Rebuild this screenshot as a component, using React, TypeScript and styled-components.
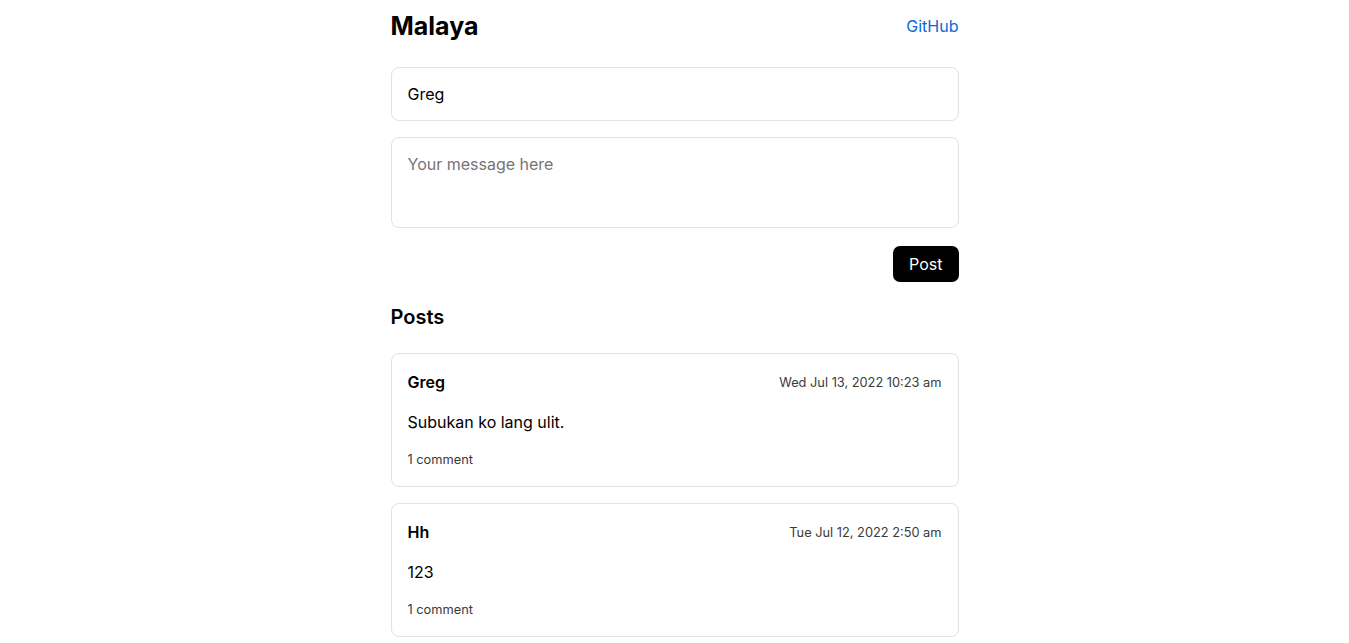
import React from "react";
import styled, { createGlobalStyle } from "styled-components";

const Global = createGlobalStyle`
  html, body { margin: 0; padding: 0; background: #fff; }
  body { font-family: Inter, "Noto Sans", sans-serif; color: #000; }
  * { box-sizing: border-box; }
`;

const Page = styled.div`
  max-width: 600px;
  margin: 0 auto;
  padding: 0 16px;
  display: flex;
  flex-direction: column;
`;

const Header = styled.header`
  height: 52px;
  display: flex;
  align-items: center;
  justify-content: space-between;
`;

const Title = styled.h1`
  margin: 0;
  font-size: 25px;
  font-weight: 700;
  line-height: 32px;
`;

const Link = styled.a`
  color: #0969da;
  font-size: 16px;
  text-decoration: none;
`;

const Form = styled.form`
  margin-top: 15px;
  display: flex;
  flex-direction: column;
  gap: 16px;
`;

const Field = styled.input`
  font: inherit;
  font-size: 16px;
  line-height: 20px;
  padding: 16px;
  border: 1px solid #e2e2e2;
  border-radius: 8px;
  color: #000;
  outline: none;
`;

const Area = styled.textarea`
  font: inherit;
  font-size: 16px;
  line-height: 20px;
  padding: 16px;
  height: 91px;
  border: 1px solid #e2e2e2;
  border-radius: 8px;
  resize: none;
  outline: none;
  &::placeholder { color: #757575; }
`;

const Actions = styled.div`
  display: flex;
  justify-content: flex-end;
  margin-top: 18px;
`;

const Button = styled.button`
  font: inherit;
  font-size: 16px;
  height: 36px;
  padding: 0 16px;
  background: #000;
  color: #fff;
  border: none;
  border-radius: 7px;
`;

const Heading = styled.h2`
  margin: 23px 0 24px;
  font-size: 20px;
  line-height: 24px;
  font-weight: 600;
`;

const List = styled.div`
  display: flex;
  flex-direction: column;
  gap: 16px;
`;

const Card = styled.article`
  border: 1px solid #e2e2e2;
  border-radius: 8px;
  padding: 16px;
  display: flex;
  flex-direction: column;
`;

const CardHead = styled.div`
  display: flex;
  justify-content: space-between;
  align-items: center;
  height: 24px;
`;

const Name = styled.span`
  font-size: 16px;
  font-weight: 600;
`;

const Date = styled.span`
  font-size: 12.8px;
  color: #3a3a3a;
`;

const Body = styled.p`
  margin: 16px 0 0;
  font-size: 16px;
  line-height: 24px;
`;

const Meta = styled.span`
  margin-top: 16px;
  font-size: 12.8px;
  line-height: 20px;
  color: #3a3a3a;
`;

const posts = [
  { name: "Greg", date: "Wed Jul 13, 2022 10:23 am", body: "Subukan ko lang ulit.", comments: "1 comment" },
  { name: "Hh", date: "Tue Jul 12, 2022 2:50 am", body: "123", comments: "1 comment" },
];

export default function App() {
  return (
    <>
      <Global />
      <Page>
        <Header>
          <Title>Malaya</Title>
          <Link href="#">GitHub</Link>
        </Header>
        <Form onSubmit={(e) => e.preventDefault()}>
          <Field defaultValue="Greg" />
          <Area placeholder="Your message here" />
        </Form>
        <Actions>
          <Button>Post</Button>
        </Actions>
        <Heading>Posts</Heading>
        <List>
          {posts.map((p) => (
            <Card key={p.date}>
              <CardHead>
                <Name>{p.name}</Name>
                <Date>{p.date}</Date>
              </CardHead>
              <Body>{p.body}</Body>
              <Meta>{p.comments}</Meta>
            </Card>
          ))}
        </List>
      </Page>
    </>
  );
}
